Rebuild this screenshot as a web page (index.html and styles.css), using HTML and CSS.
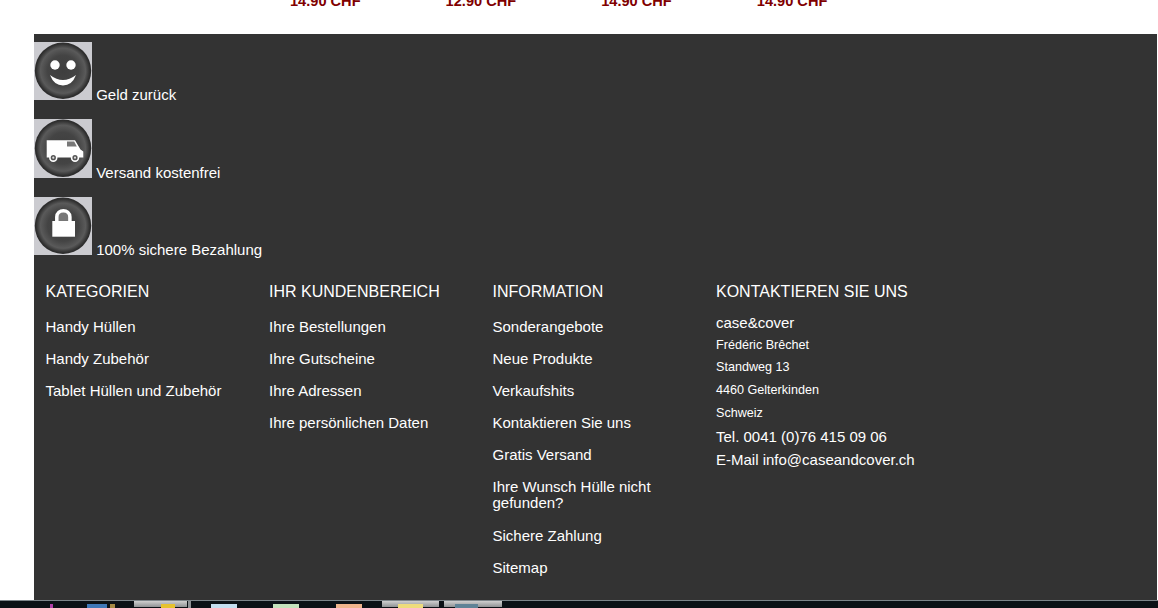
FILE: index.html
```html
<!DOCTYPE html>
<html lang="de">
<head>
  <meta charset="UTF-8">
  <title>case&amp;cover</title>
  <link rel="stylesheet" href="styles.css">
</head>
<body>
  <svg class="defs" width="0" height="0" aria-hidden="true">
    <defs>
      <radialGradient id="ball" cx="50%" cy="50%" r="50%">
        <stop offset="0" stop-color="#3e3e3e"/>
        <stop offset="0.55" stop-color="#444"/>
        <stop offset="0.8" stop-color="#5a5a5a"/>
        <stop offset="0.95" stop-color="#303030"/>
        <stop offset="1" stop-color="#2a2a2a"/>
      </radialGradient>
    </defs>
  </svg>

  <div class="prices">
    <span class="price">14.90 CHF</span>
    <span class="price">12.90 CHF</span>
    <span class="price">14.90 CHF</span>
    <span class="price">14.90 CHF</span>
  </div>

  <footer class="footer">
    <p class="perk">
      <svg class="perk-icon" viewBox="0 0 58 58" width="58" height="58">
        <rect width="58" height="58" fill="#cbcbd0"/>
        <circle cx="29" cy="28.7" r="28.2" fill="url(#ball)"/>
        <circle cx="21" cy="23" r="4.7" fill="#fff"/>
        <circle cx="37" cy="23" r="4.7" fill="#fff"/>
        <path d="M16 33Q29 43 42 33Q38 43.5 29 43.5Q20 43.5 16 33Z" fill="#fff"/>
      </svg>
      Geld zurück
    </p>
    <p class="perk">
      <svg class="perk-icon perk-icon-tall" viewBox="0 0 58 58" width="58" height="59" preserveAspectRatio="none">
        <rect width="58" height="58" fill="#cbcbd0"/>
        <circle cx="29" cy="28.7" r="28.2" fill="url(#ball)"/>
        <path d="M12.7 21H41L46.5 30L49.3 32V37.8H12.7Z" fill="#fff"/>
        <path d="M33 22.2H40.2L42.8 27H33Z" fill="#777"/>
        <circle cx="19.3" cy="38" r="4.2" fill="#fff"/>
        <circle cx="19.3" cy="38" r="2.6" fill="#555"/>
        <circle cx="19.3" cy="38" r="1.1" fill="#ddd"/>
        <circle cx="41" cy="38" r="4.2" fill="#fff"/>
        <circle cx="41" cy="38" r="2.6" fill="#555"/>
        <circle cx="41" cy="38" r="1.1" fill="#ddd"/>
      </svg>
      Versand kostenfrei
    </p>
    <p class="perk">
      <svg class="perk-icon" viewBox="0 0 58 58" width="58" height="58">
        <rect width="58" height="58" fill="#cbcbd0"/>
        <circle cx="29" cy="28.7" r="28.2" fill="url(#ball)"/>
        <path d="M22.8 25V20C22.8 11.5 35.9 11.5 35.9 20V25" fill="#777" stroke="#fff" stroke-width="3.5"/>
        <rect x="18.3" y="24" width="22.7" height="15.7" fill="#fff"/>
      </svg>
      100% sichere Bezahlung
    </p>

    <div class="columns">
      <section class="col">
        <h4 class="col-title">KATEGORIEN</h4>
        <ul class="links">
          <li>Handy Hüllen</li>
          <li>Handy Zubehör</li>
          <li>Tablet Hüllen und Zubehör</li>
        </ul>
      </section>
      <section class="col">
        <h4 class="col-title">IHR KUNDENBEREICH</h4>
        <ul class="links">
          <li>Ihre Bestellungen</li>
          <li>Ihre Gutscheine</li>
          <li>Ihre Adressen</li>
          <li>Ihre persönlichen Daten</li>
        </ul>
      </section>
      <section class="col">
        <h4 class="col-title">INFORMATION</h4>
        <ul class="links">
          <li>Sonderangebote</li>
          <li>Neue Produkte</li>
          <li>Verkaufshits</li>
          <li>Kontaktieren Sie uns</li>
          <li>Gratis Versand</li>
          <li>Ihre Wunsch Hülle nicht gefunden?</li>
          <li>Sichere Zahlung</li>
          <li>Sitemap</li>
        </ul>
      </section>
      <section class="col">
        <h4 class="col-title">KONTAKTIEREN SIE UNS</h4>
        <div class="contact">
          <div class="contact-big">case&amp;cover</div>
          <div class="contact-small">Frédéric Brêchet</div>
          <div class="contact-small">Standweg 13</div>
          <div class="contact-small">4460 Gelterkinden</div>
          <div class="contact-small">Schweiz</div>
          <div class="contact-big">Tel. 0041 (0)76 415 09 06</div>
          <div class="contact-big">E-Mail info@caseandcover.ch</div>
        </div>
      </section>
    </div>
  </footer>

  <div class="taskbar">
    <span class="tb-icon tb-magenta"></span>
    <span class="tb-icon tb-blue"></span>
    <span class="tb-icon tb-gold"></span>
    <span class="tb-tab tb-tab-first"><span class="tb-icon tb-yellow"></span></span>
    <span class="tb-sep"></span>
    <span class="tb-icon tb-sky"></span>
    <span class="tb-icon tb-green"></span>
    <span class="tb-icon tb-orange"></span>
    <span class="tb-tab tb-tab-second"><span class="tb-icon tb-pale"></span></span>
    <span class="tb-tab tb-tab-third"><span class="tb-icon tb-steel"></span></span>
  </div>
</body>
</html>
```

FILE: styles.css
```css
html, body {
  margin: 0;
  height: 608px;
  overflow: hidden;
}
body {
  display: flex;
  flex-direction: column;
  background: #fff;
  font-family: "Liberation Sans", Arial, sans-serif;
  color: #fff;
}
.defs {
  position: absolute;
}

.prices {
  display: flex;
  flex: 0 0 34px;
  padding-left: 290px;
  overflow: hidden;
}
.price {
  width: 155.6px;
  margin-top: -8px;
  font-size: 14.6px;
  line-height: 18px;
  font-weight: bold;
  color: #800000;
}

.footer {
  flex: 1;
  margin: 0 1px 0 34px;
  padding-top: 8px;
  background: #333;
  min-height: 0;
}
.perk {
  height: 78px;
  margin: 0;
  font-size: 15px;
  line-height: 17px;
}
.perk:first-child {
  height: 77px;
}
.perk-icon {
  vertical-align: baseline;
}

.columns {
  display: flex;
  margin-top: 6.5px;
  padding-left: 11.5px;
}
.col {
  width: 223.5px;
}
.col-title {
  margin: 0 0 17px;
  font-size: 16px;
  line-height: 20px;
  font-weight: normal;
}
.links {
  margin: 0;
  padding: 0;
  list-style: none;
  font-size: 15px;
  line-height: 16.5px;
}
.links li {
  width: 180px;
  margin-bottom: 15.6px;
}
.contact {
  margin-top: -8px;
}
.contact-big {
  font-size: 15px;
  line-height: 23px;
}
.contact-small {
  font-size: 12.6px;
  line-height: 22.9px;
}

.taskbar {
  display: flex;
  flex: 0 0 7px;
  box-sizing: border-box;
  border-top: 1px solid #7d858a;
  background: #0b1116;
}
.tb-icon {
  display: block;
  height: 4px;
  margin-top: 3px;
}
.tb-tab {
  display: flex;
  height: 6px;
  background: linear-gradient(#cfcfcf, #8f9294);
}
.tb-sep {
  width: 3px;
  margin-left: 1px;
  background: #8d9195;
}
.tb-magenta { width: 3px; margin-left: 50px; background: #b03fa8; }
.tb-blue { width: 20px; margin-left: 34px; background: #3f78b8; }
.tb-gold { width: 5px; margin-left: 3px; background: #a58a45; }
.tb-tab-first { width: 53px; margin-left: 19px; }
.tb-yellow { width: 14px; margin-left: 27px; background: #e6c22e; }
.tb-sky { width: 26px; margin-left: 20px; background: #c5dff0; }
.tb-green { width: 26px; margin-left: 36px; background: #c5e3bd; }
.tb-orange { width: 26px; margin-left: 37px; background: #efb48c; }
.tb-tab-second { width: 57px; margin-left: 20px; }
.tb-pale { width: 25px; margin-left: 16px; background: #eedc7c; }
.tb-tab-third { width: 58px; margin-left: 5px; }
.tb-steel { width: 23px; margin-left: 11px; background: #5f8296; }
```
